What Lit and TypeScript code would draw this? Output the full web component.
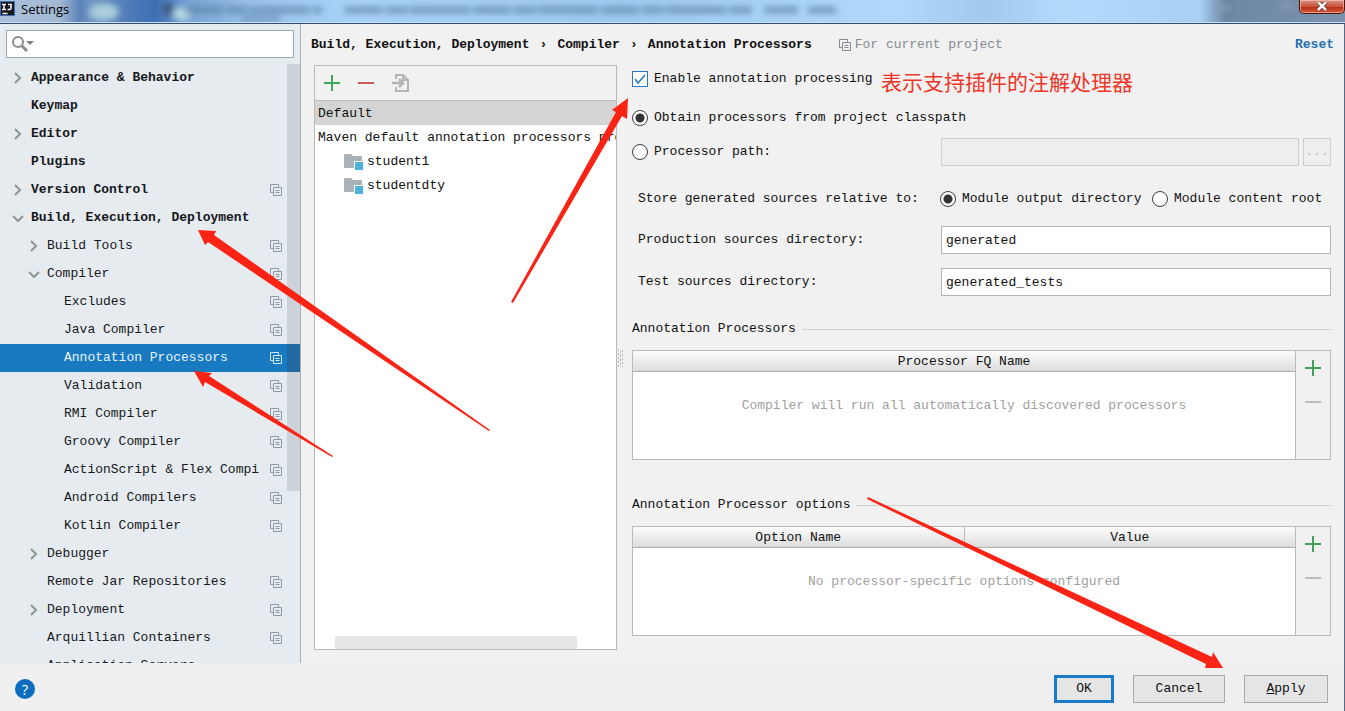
import { LitElement, html, css, svg, nothing } from "lit";
import { customElement, property, state } from "lit/decorators.js";
import { classMap } from "lit/directives/class-map.js";

interface TreeNode {
  label: string;
  level: 0 | 1 | 2;
  arrow?: "open" | "closed";
  project?: boolean;
}

const TREE: TreeNode[] = [
  { label: "Appearance & Behavior", level: 0, arrow: "closed" },
  { label: "Keymap", level: 0 },
  { label: "Editor", level: 0, arrow: "closed" },
  { label: "Plugins", level: 0 },
  { label: "Version Control", level: 0, arrow: "closed", project: true },
  { label: "Build, Execution, Deployment", level: 0, arrow: "open" },
  { label: "Build Tools", level: 1, arrow: "closed", project: true },
  { label: "Compiler", level: 1, arrow: "open", project: true },
  { label: "Excludes", level: 2, project: true },
  { label: "Java Compiler", level: 2, project: true },
  { label: "Annotation Processors", level: 2, project: true },
  { label: "Validation", level: 2, project: true },
  { label: "RMI Compiler", level: 2, project: true },
  { label: "Groovy Compiler", level: 2, project: true },
  { label: "ActionScript & Flex Compiler", level: 2, project: true },
  { label: "Android Compilers", level: 2, project: true },
  { label: "Kotlin Compiler", level: 2, project: true },
  { label: "Debugger", level: 1, arrow: "closed" },
  { label: "Remote Jar Repositories", level: 1, project: true },
  { label: "Deployment", level: 1, arrow: "closed", project: true },
  { label: "Arquillian Containers", level: 1, project: true },
  { label: "Application Servers", level: 1 },
];

const projectIcon = html`<svg class="picon" width="12" height="12" viewBox="0 0 12 12" fill="none" stroke="currentColor" aria-hidden="true">
  <path d="M3 8.5H.5V.5h8V3" /><path d="M3.5 3.5h8v8h-8z" /><path d="M5.5 6.5h4M5.5 8.5h4" />
</svg>`;
const plusIcon = html`<svg width="16" height="16" viewBox="0 0 16 16" stroke="#3fa558" stroke-width="2" aria-hidden="true"><path d="M8 0v16M0 8h16" /></svg>`;
const minusIcon = html`<svg width="16" height="16" viewBox="0 0 16 16" stroke="currentColor" stroke-width="2" aria-hidden="true"><path d="M0 8h16" /></svg>`;
const folderIcon = html`<svg width="20" height="18" viewBox="0 0 20 18" aria-hidden="true">
  <path d="M0 1h7l2 2h9v12H0z" fill="#aab2b7" /><path d="M10 8h10v10H10z" fill="#fff" /><path d="M11 9h8v8h-8z" fill="#4bb3de" />
</svg>`;

@customElement("settings-tree")
class SettingsTree extends LitElement {
  @state() private selected = "Annotation Processors";

  static styles = css`
    :host { display: block; position: relative; flex: 1; min-height: 0; overflow: hidden; }
    .list { list-style: none; margin: 0; padding: 0; }
    .row {
      display: flex; align-items: center; width: 100%; height: 28px; box-sizing: border-box;
      border: 0; background: none; padding: 0 18px 0 12px; font: inherit; color: #16181a; text-align: left;
    }
    .level1 { padding-left: 28px; }
    .level2 { padding-left: 45px; }
    .top { font-weight: bold; }
    .selected { background: #197ac2 linear-gradient(to left, #0a63a8 13px, transparent 13px); color: #e8f3fc; }
    .chev { flex: none; width: 12px; height: 12px; margin-right: 7px; }
    .label { flex: 1; min-width: 0; overflow: hidden; white-space: nowrap; margin-right: 11px; }
    .picon { flex: none; color: #8d9ba6; }
    .selected .picon { color: #d5e8f7; }
    .thumb { position: absolute; top: 0; right: 0; width: 13px; height: 427px; background: rgba(120, 125, 130, 0.22); }
  `;

  render() {
    return html`<ul class="list">
        ${TREE.map(
          (n) => html`<li>
            <button
              class=${classMap({ row: true, top: n.level === 0, level1: n.level === 1, level2: n.level === 2, selected: n.label === this.selected })}
              @click=${() => (this.selected = n.label)}
            >
              <svg class="chev" viewBox="0 0 12 12" fill="none" stroke="#8f9396" stroke-width="2" aria-hidden="true">
                ${n.arrow === "closed" ? svg`<path d="M3 1l5 5-5 5"/>` : n.arrow === "open" ? svg`<path d="M1 4l5 5 5-5"/>` : nothing}
              </svg>
              <span class="label">${n.label}</span>
              ${n.project ? projectIcon : nothing}
            </button>
          </li>`,
        )}
      </ul>
      <div class="thumb"></div>`;
  }
}

@customElement("processor-table")
class ProcessorTable extends LitElement {
  @property({ type: Array }) columns: string[] = [];
  @property() heading = "";
  @property() empty = "";

  static styles = css`
    :host { display: block; }
    .title { display: flex; align-items: center; gap: 6px; height: 28px; margin: 0 0 7px; font: inherit; }
    .title::after { content: ""; flex: 1; height: 1px; background: #d0d0d0; }
    .frame { display: flex; height: 108px; border: 1px solid #b9b9b9; }
    .grid { flex: 1; border-collapse: collapse; table-layout: fixed; background: #fff; display: block; }
    .grid thead, .grid tbody { display: block; }
    .grid tr { display: flex; }
    .head {
      flex: 1; box-sizing: border-box; height: 21px; line-height: 21px; padding: 0; font-weight: normal;
      background: linear-gradient(#fdfdfd, #dcdcdc); border-bottom: 1px solid #b0b0b0; border-right: 1px solid #b9b9b9;
    }
    .head:last-child { border-right: 0; }
    .none { flex: 1; padding: 24px 0 0; line-height: 20px; text-align: center; color: #a0a0a0; }
    .side { display: flex; flex-direction: column; width: 34px; border-left: 1px solid #b9b9b9; background: #f1f1f1; }
    .act { display: grid; place-items: center; height: 34px; border: 0; padding: 0; background: none; }
    .act:disabled { color: #bdbdbd; }
  `;

  render() {
    return html`<h2 class="title">${this.heading}</h2>
      <div class="frame">
        <table class="grid" aria-label=${this.heading}>
          <thead><tr>${this.columns.map((c) => html`<th class="head" scope="col">${c}</th>`)}</tr></thead>
          <tbody><tr><td class="none" colspan=${this.columns.length}>${this.empty}</td></tr></tbody>
        </table>
        <div class="side">
          <button class="act" aria-label="Add">${plusIcon}</button>
          <button class="act" aria-label="Remove" disabled>${minusIcon}</button>
        </div>
      </div>`;
  }
}

@customElement("app-root")
class AppRoot extends LitElement {
  static styles = css`
    :host {
      display: flex; flex-direction: column; position: relative; height: 100vh; overflow: hidden; box-sizing: border-box;
      background: #f1f1f1; color: #101010; font: 13px/20px "Liberation Mono", "Noto Sans CJK SC", monospace;
    }
    button, input { font: inherit; color: inherit; }

    .titlebar {
      position: relative; flex: none; display: flex; align-items: flex-start; gap: 5px; height: 24px; box-sizing: border-box;
      overflow: hidden; border-bottom: 1px solid #35506f;
      background: linear-gradient(to right, #a9c1dc 0, #a3b9d2 60px, #5c82b8 80px, #6e93c2 90px, #4f7cb8 130px, #3d6fb3 155px, #7aa4d4 190px, #9cc6ee 260px, #a9d2f7 360px, #9fcaf0 620px, #b0d8fb 900px, #a2c9ec 985px, #b3dafb 1060px, #aad1f5 1200px, #6d87a5 1225px, #7b93ad 100%);
      box-shadow: inset 0 -1px #c9def2;
    }
    .haze { position: absolute; left: 0; top: 0; }
    .logo, .name, .close { position: relative; }
    .name { font: 13px/18px "Open Sans", "Noto Sans", sans-serif; color: #000; }
    .close {
      display: grid; place-items: center; margin-left: auto; width: 46px; height: 14px; padding: 0;
      border: 1px solid #4b1710; border-top: 0; border-radius: 0 0 5px 5px;
      background: linear-gradient(#dc8f80, #c8523b 50%, #b62c12 52%, #d5593b); box-shadow: inset 0 0 0 1px rgba(255, 225, 215, 0.5);
    }

    .body { flex: 1; min-height: 0; display: flex; border-right: 1px solid #506b8b; }
    .sidebar { flex: none; display: flex; flex-direction: column; width: 300px; background: #e6ebf0; border-right: 1px solid #a9b0b5; }
    .search { flex: none; display: flex; align-items: center; height: 26px; margin: 6px 6px 6px; border: 1px solid #93a9b8; background: #fff; padding-left: 5px; }
    .query { flex: 1; min-width: 0; border: 0; outline: 0; background: none; }

    .page { flex: 1; min-width: 0; display: flex; flex-direction: column; padding: 0 13px 13px; }
    .crumbs { flex: none; display: flex; align-items: center; height: 41px; margin-left: -3px; margin-right: -3px; white-space: nowrap; }
    .crumb { font-weight: bold; }
    .sep { width: 28px; text-align: center; font-weight: bold; }
    .scope { display: flex; align-items: center; gap: 4px; margin-left: 27px; color: #858b90; }
    .reset { margin-left: auto; color: #2470b3; font-weight: bold; text-decoration: none; }

    .split { flex: 1; min-height: 0; display: flex; }
    .profiles { flex: none; display: flex; flex-direction: column; width: 301px; border: 1px solid #b9b9b9; background: #fff; overflow: hidden; }
    .tools { flex: none; display: flex; align-items: center; gap: 18px; height: 34px; padding-left: 9px; background: #f1f1f1; border-bottom: 1px solid #b9b9b9; }
    .tool { display: grid; place-items: center; border: 0; padding: 0; background: none; }
    .minus { color: #cf5b56; }
    .names { flex: 1; margin: 0; padding: 0; list-style: none; }
    .profile { display: flex; align-items: center; gap: 3px; box-sizing: border-box; height: 24px; padding: 2px 0 0 3px; white-space: nowrap; }
    .current { background: #d4d4d4; }
    .module { padding-left: 29px; }
    .hbar { flex: none; width: 242px; height: 13px; margin-left: 20px; background: #e6e6e6; }
    .grip { flex: none; display: grid; align-items: center; width: 15px; }

    .form { flex: 1; min-width: 0; }
    .line { display: flex; align-items: center; height: 28px; white-space: nowrap; }
    .g6 { margin-top: 6px; } .g11 { margin-top: 11px; } .g13 { margin-top: 13px; } .g14 { margin-top: 14px; } .g19 { margin-top: 19px; } .g31 { margin-top: 31px; }
    .opt { display: flex; align-items: center; gap: 6px; }
    .lead { flex: none; box-sizing: border-box; width: 309px; }
    .inset { padding-left: 6px; }
    .near { width: 212px; margin-left: -1px; }
    .radio, .check { flex: none; appearance: none; width: 16px; height: 16px; margin: 0; box-sizing: border-box; background: #fff; }
    .radio { border: 1px solid #3c3c3c; border-radius: 50%; }
    .radio:checked { background: radial-gradient(circle, #333 4px, #fff 5px); }
    .check { border: 1px solid #2675bf; }
    .check:checked { background: #fff url("data:image/svg+xml,%3Csvg xmlns='http://www.w3.org/2000/svg' viewBox='0 0 14 14'%3E%3Cpath d='M2 7l3 4 7-8' fill='none' stroke='%232675bf' stroke-width='1.5'/%3E%3C/svg%3E"); }
    .field { flex: 1; min-width: 0; height: 28px; box-sizing: border-box; border: 1px solid #b5b5b5; background: #fff; padding: 0 4px; }
    .field:disabled { background: #eee; border-color: #cfcfcf; }
    .browse { width: 28px; height: 28px; margin-left: 4px; padding: 0; border: 1px solid #cfcfcf; background: #eee; color: #b5b5b5; }

    .footer { flex: none; display: flex; align-items: center; height: 48px; padding: 0 16px 0 15px; background: #efefef; border-right: 1px solid #506b8b; box-sizing: border-box; }
    .help { width: 20px; height: 20px; margin-top: 4px; margin-right: auto; padding: 0; border: 0; border-radius: 50%; background: #0b6cc0; color: #fff; font: 15px/20px "Open Sans", sans-serif; }
    .btn { height: 28px; margin: 4px 0 0 19px; padding: 0; border: 1px solid #a8a8a8; background: #e5e5e5; width: 92px; }
    .ok { width: 60px; border: 3px solid #1a7cc9; }
    .apply { width: 84px; }

    .note { position: absolute; left: 881px; top: 66px; font: 21px/30px "Noto Sans CJK SC", sans-serif; color: #ef3528; white-space: nowrap; }
    .arrows { position: absolute; left: 0; top: 0; pointer-events: none; }
  `;

  render() {
    return html`
      <header class="titlebar">
        <svg class="haze" width="1345" height="22" aria-hidden="true">
          <defs><filter id="b" x="-20%" y="-100%" width="140%" height="300%"><feGaussianBlur stdDeviation="3" /></filter></defs>
          <g filter="url(#b)">
            <ellipse cx="104" cy="12" rx="15" ry="9" fill="#a9cdd9" />
            <ellipse cx="182" cy="14" rx="9" ry="7" fill="#b3d8e2" />
            <ellipse cx="168" cy="9" rx="6" ry="7" fill="#3d5c84" />
            <path d="M185 10H322M345 10H752M765 10H798M808 10H836" stroke="#53779b" stroke-width="7" stroke-dasharray="38 3 22 2 60 3" opacity=".6" />
            <path d="M242 19h38" stroke="#4d7296" stroke-width="6" opacity=".5" />
            <path d="M1215 8h14M1280 6h14" stroke="#8799ad" stroke-width="6" />
          </g>
        </svg>
        <svg class="logo" width="16" height="18" viewBox="0 0 16 18" aria-hidden="true">
          <path d="M0 1h15v15H0z" fill="#3a6fb8" /><path d="M1 2h13v13H1z" fill="#17171c" />
          <path d="M2 4.5h4M4 4v6M2 9.5h4M8 4.5h4M11 4v4q0 2-3.500 1.500M2.500 13.500h5" stroke="#fff" stroke-width="1.500" fill="none" />
        </svg>
        <span class="name">Settings</span>
        <button class="close" aria-label="Close">
          <svg width="12" height="9" viewBox="0 0 12 9" aria-hidden="true"><path d="M2 0l8 8M10 0L2 8" stroke="#5a2a24" stroke-width="4" /><path d="M2 0l8 8M10 0L2 8" stroke="#fff" stroke-width="2.500" /></svg>
        </button>
      </header>

      <div class="body">
        <nav class="sidebar" aria-label="Settings">
          <div class="search">
            <svg width="24" height="18" viewBox="0 0 24 18" fill="none" stroke="#8a8a8a" aria-hidden="true">
              <circle cx="6" cy="7" r="5" stroke-width="2" /><path d="M10 11l5 5" stroke-width="3" /><path d="M14 6h8l-4 4z" fill="#7f7f7f" stroke="none" />
            </svg>
            <input class="query" type="text" aria-label="Search settings" />
          </div>
          <settings-tree></settings-tree>
        </nav>

        <main class="page">
          <div class="crumbs">
            <span class="crumb">Build, Execution, Deployment</span><span class="sep">›</span>
            <span class="crumb">Compiler</span><span class="sep">›</span>
            <span class="crumb">Annotation Processors</span>
            <span class="scope">${projectIcon}For current project</span>
            <a class="reset" href="#reset">Reset</a>
          </div>

          <div class="split">
            <section class="profiles" aria-label="Profiles">
              <div class="tools">
                <button class="tool" aria-label="Add profile">${plusIcon}</button>
                <button class="tool minus" aria-label="Remove profile">${minusIcon}</button>
                <button class="tool" aria-label="Move to" disabled>
                  <svg width="18" height="20" viewBox="0 0 18 20" fill="none" stroke="#b4b4b4" stroke-width="2" aria-hidden="true">
                    <path d="M4 6V2h7l5 5v11H4v-4" /><path d="M11 2v5h5" /><path d="M0 10h10M7 6l4 4-4 4" stroke-width="2.500" />
                  </svg>
                </button>
              </div>
              <ul class="names">
                <li class="profile current">Default</li>
                <li class="profile">Maven default annotation processors profile</li>
                <li class="profile module">${folderIcon}student1</li>
                <li class="profile module">${folderIcon}studentdty</li>
              </ul>
              <div class="hbar"></div>
            </section>
            <div class="grip">
              <svg width="8" height="18" viewBox="0 0 8 18" stroke="#b5b5b5" stroke-dasharray="2 2" aria-hidden="true"><path d="M1.500 0v18M5.500 1v17M3.500 2v16" /></svg>
            </div>

            <section class="form">
              <div class="line"><label class="opt"><input class="check" type="checkbox" checked />Enable annotation processing</label></div>
              <div class="line g11"><label class="opt"><input class="radio" type="radio" name="source" checked />Obtain processors from project classpath</label></div>
              <div class="line g6">
                <label class="opt lead"><input class="radio" type="radio" name="source" />Processor path:</label>
                <input class="field" type="text" aria-label="Processor path" disabled />
                <button class="browse" aria-label="Browse" disabled>...</button>
              </div>
              <div class="line g19" role="radiogroup" aria-labelledby="store">
                <span class="lead inset" id="store">Store generated sources relative to:</span>
                <label class="opt near"><input class="radio" type="radio" name="root" checked />Module output directory</label>
                <label class="opt"><input class="radio" type="radio" name="root" />Module content root</label>
              </div>
              <div class="line g13">
                <label class="lead inset" for="prod">Production sources directory:</label>
                <input class="field" id="prod" type="text" value="generated" />
              </div>
              <div class="line g14">
                <label class="lead inset" for="test">Test sources directory:</label>
                <input class="field" id="test" type="text" value="generated_tests" />
              </div>
              <processor-table class="g19" heading="Annotation Processors" .columns=${["Processor FQ Name"]}
                empty="Compiler will run all automatically discovered processors"></processor-table>
              <processor-table class="g31" heading="Annotation Processor options" .columns=${["Option Name", "Value"]}
                empty="No processor-specific options configured"></processor-table>
            </section>
          </div>
        </main>
      </div>

      <footer class="footer">
        <button class="help" aria-label="Help">?</button>
        <button class="btn ok">OK</button>
        <button class="btn">Cancel</button>
        <button class="btn apply"><u>A</u>pply</button>
      </footer>

      <span class="note">表示支持插件的注解处理器</span>
      <svg class="arrows" width="1345" height="711" fill="#fb2314" aria-hidden="true">
        <path d="M198 230L216 231L214 235L490 430L489 431L208 242L205 245Z" />
        <path d="M194 371L212 373L209 376L333 456L332 457L205 382L203 387Z" />
        <path d="M628 98L612 110L616 112L511 302L513 303L622 116L627 119Z" />
        <path d="M1223 668L1213 652L1212 657L868 497L867 499L1206 664L1205 668Z" />
      </svg>
    `;
  }
}
